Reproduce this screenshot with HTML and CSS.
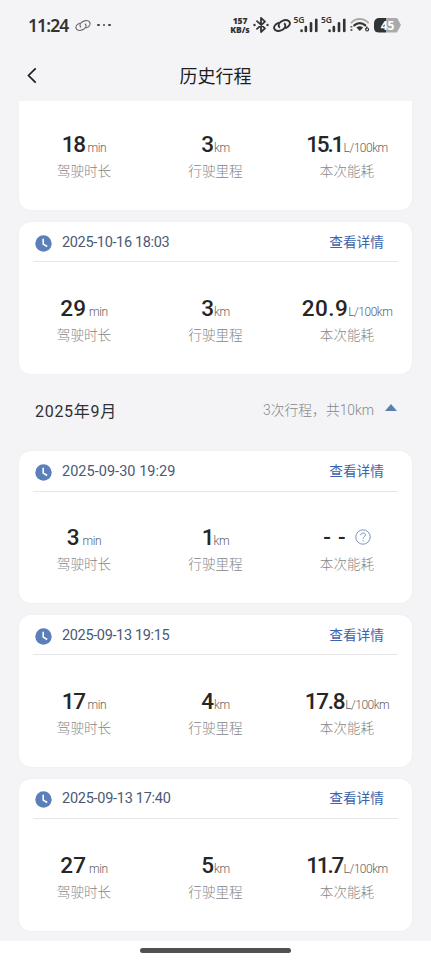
FILE: index.html
```html
<!DOCTYPE html>
<html lang="zh-CN">
<head>
<meta charset="utf-8">
<meta name="viewport" content="width=device-width, initial-scale=1">
<title>历史行程</title>
<link rel="stylesheet" href="styles.css">
</head>
<body>
<svg class="defs" width="0" height="0" aria-hidden="true">
  <symbol id="clock" viewBox="0 0 17 17"><circle cx="8.5" cy="8.5" r="8.2" fill="#5b7fb8"/><path d="M8.2 3.800v5.300l4 2.400" fill="none" stroke="#fff" stroke-width="1.600"/></symbol>
  <symbol id="link" viewBox="0 0 18 14"><g fill="none" stroke="currentColor"><ellipse cx="6.700" cy="8.200" rx="5.800" ry="4" transform="rotate(-20 6.700 8.200)" pathLength="100" stroke-dasharray="77 17 6 0"/><ellipse cx="11.300" cy="5.800" rx="5.800" ry="4" transform="rotate(-20 11.300 5.800)" pathLength="100" stroke-dasharray="27 17 56 0"/></g></symbol>
  <symbol id="signal" viewBox="0 0 19 15"><path d="M1.600 12.800v.4M6 9v4.200M11.300 5.200v8M16.700 1.600v11.600" stroke="#333" stroke-width="2.700" stroke-linecap="round"/></symbol>
</svg>
<header class="status">
  <span class="time">11:24</span>
  <svg class="link-small" viewBox="0 0 18 14"><use href="#link"/></svg>
  <span class="dots"><i></i><i></i><i></i></span>
  <span class="speed"><b>157</b><b>KB/s</b></span>
  <svg class="bt" viewBox="0 0 16 18"><path d="M4 5.200l8 7.200-4 3.600V2l4 3.600-8 7.200" fill="none" stroke="#333" stroke-width="1.800" stroke-linejoin="round" stroke-linecap="round"/><circle cx="1.500" cy="9" r="1.200" fill="#333"/><circle cx="14.500" cy="9" r="1.200" fill="#333"/></svg>
  <svg class="link-big" viewBox="0 0 18 14"><use href="#link"/></svg>
  <span class="cell"><small>5G</small><svg viewBox="0 0 19 15"><use href="#signal"/></svg></span>
  <span class="cell"><small>5G</small><svg viewBox="0 0 19 15"><use href="#signal"/></svg></span>
  <svg class="wifi" viewBox="0 0 21 16"><g fill="none" stroke-linecap="round"><path d="M1.500 5.500c4.800-5 12.700-5 17.500 0" stroke="#aaa" stroke-width="2"/><path d="M4.500 8.400c3.200-3.200 8.300-3.200 11.500 0" stroke="#333" stroke-width="2.300"/></g><path d="M6.700 10.700c2.100-1.700 5-1.700 7.100 0l-3.500 3.500z" fill="#333"/><path d="M1.500 9.200v1.500M1.500 12.500v1.500" stroke="#333" stroke-width="2"/><circle cx="18" cy="12.700" r="1.500" fill="none" stroke="#333" stroke-width="1.200"/><path d="M16.600 12.200l1.500-2.600" stroke="#333" stroke-width="1.200"/></svg>
  <span class="battery">45</span>
</header>
<nav class="title">
  <svg class="back" viewBox="0 0 10 17"><path d="M8.700 1.300L1.500 8.500l7.200 7.200" fill="none" stroke="#1d1d1f" stroke-width="1.700"/></svg>
  <h1>历史行程</h1>
</nav>
<main class="trips">
  <section class="card clipped">
    <dl class="stats">
      <div><dd><b class="snug">18</b><span class="unit min">min</span></dd><dt>驾驶时长</dt></div>
      <div><dd><b>3</b><span class="unit">km</span></dd><dt>行驶里程</dt></div>
      <div><dd><b class="tight">15.1</b><span class="unit rate">L/100km</span></dd><dt>本次能耗</dt></div>
    </dl>
  </section>
  <section class="card">
    <div class="head"><svg class="clock"><use href="#clock"/></svg><time class="t1">2025-10-16 18:03</time><a>查看详情</a></div>
    <dl class="stats">
      <div><dd><b>29</b><span class="unit min">min</span></dd><dt>驾驶时长</dt></div>
      <div><dd><b>3</b><span class="unit">km</span></dd><dt>行驶里程</dt></div>
      <div><dd><b class="wide">20.9</b><span class="unit rate">L/100km</span></dd><dt>本次能耗</dt></div>
    </dl>
  </section>
  <div class="month"><h2>2025年9月</h2><p>3次行程，共10km</p><i class="arrow"></i></div>
  <section class="card">
    <div class="head"><svg class="clock"><use href="#clock"/></svg><time class="t2">2025-09-30 19:29</time><a>查看详情</a></div>
    <dl class="stats">
      <div><dd><b>3</b><span class="unit min">min</span></dd><dt>驾驶时长</dt></div>
      <div><dd><b class="one">1</b><span class="unit">km</span></dd><dt>行驶里程</dt></div>
      <div><dd><b class="none">--</b><svg class="help" viewBox="0 0 16 16"><circle cx="8" cy="8" r="7.200"/><path d="M5.700 6.200c0-3 4.700-3 4.700-.2 0 1.700-2.300 1.700-2.300 3.800M8.100 11.200v1.300"/></svg></dd><dt>本次能耗</dt></div>
    </dl>
  </section>
  <section class="card">
    <div class="head"><svg class="clock"><use href="#clock"/></svg><time class="t3">2025-09-13 19:15</time><a>查看详情</a></div>
    <dl class="stats">
      <div><dd><b class="snug">17</b><span class="unit min">min</span></dd><dt>驾驶时长</dt></div>
      <div><dd><b>4</b><span class="unit">km</span></dd><dt>行驶里程</dt></div>
      <div><dd><b class="medium">17.8</b><span class="unit rate">L/100km</span></dd><dt>本次能耗</dt></div>
    </dl>
  </section>
  <section class="card">
    <div class="head"><svg class="clock"><use href="#clock"/></svg><time class="t4">2025-09-13 17:40</time><a>查看详情</a></div>
    <dl class="stats">
      <div><dd><b>27</b><span class="unit min">min</span></dd><dt>驾驶时长</dt></div>
      <div><dd><b>5</b><span class="unit">km</span></dd><dt>行驶里程</dt></div>
      <div><dd><b class="tight">11.7</b><span class="unit rate">L/100km</span></dd><dt>本次能耗</dt></div>
    </dl>
  </section>
</main>
<footer class="home"><span></span></footer>
</body>
</html>
```
FILE: styles.css
```css
* { box-sizing: border-box; margin: 0; padding: 0; }
body { width: 431px; height: 960px; overflow: hidden; background: #f4f4f6; color: #262628; font-family: Roboto, "Noto Sans CJK SC", sans-serif; display: flex; flex-direction: column; }
.defs { position: absolute; }
i { font-style: normal; }
svg { display: block; flex: none; }

.status { height: 50px; flex: none; display: flex; align-items: center; padding: 0 30px 0 28px; color: #333; }
.time { width: 41px; font: 600 17.5px/20px "Noto Sans", sans-serif; letter-spacing: -.9px; white-space: nowrap; }
.link-small { width: 16px; height: 13px; margin-left: 6px; color: #666; stroke-width: 1.3; }
.dots { display: flex; gap: 3px; margin-left: 6px; }
.dots i { width: 2.500px; height: 2.500px; border-radius: 2px; background: #444; }
.speed { margin-left: auto; width: 20px; display: flex; flex-direction: column; align-items: center; font: 700 8.5px/9.500px "Noto Sans", sans-serif; }
.speed b { letter-spacing: -.1px; }
.bt { width: 16px; height: 18px; margin-left: 3px; }
.link-big { width: 18px; height: 15px; margin-left: 4px; stroke-width: 1.9; }
.cell { width: 27.500px; height: 19px; margin-top: -3px; display: flex; align-items: flex-end; justify-content: flex-end; position: relative; }
.cell small { position: absolute; left: 2.500px; top: 1px; font: 600 8.500px/9px "Noto Sans", sans-serif; }
.cell svg { width: 18.500px; height: 15px; }
.wifi { width: 20px; height: 16px; margin-left: 4px; }
.battery { width: 27px; height: 15px; margin-left: 4px; border-radius: 5px; background: linear-gradient(90deg, #333 45%, #aaa 45%); color: #fff; font: 700 12px/15px "Noto Sans", sans-serif; text-align: center; clip-path: polygon(0 0, 85% 0, 100% 50%, 85% 100%, 0 100%); }

.title { height: 51px; flex: none; display: grid; grid-template-columns: 28px 1fr 28px; align-items: center; }
.back { width: 10px; height: 17px; margin-left: 27px; }
.title h1 { padding-top: 2px; font-size: 18px; font-weight: 400; line-height: 26px; text-align: center; color: #1d1d1f; }

.trips { height: 840px; flex: none; overflow: hidden; }
.card { height: 152px; width: 393px; margin: 0 auto 11.800px; background: #fff; border-radius: 12px; box-shadow: 0 0 2px rgba(0, 0, 0, .05); }
.card.clipped { height: 109px; border-radius: 0 0 12px 12px; }
.head { height: 40.500px; margin: 0 14px; border-bottom: 1px solid #e6e6e9; display: flex; align-items: center; }
.clock { width: 17px; height: 17px; margin: 3px 10px 0 2px; }
time { padding-top: 2px; font-size: 14.500px; line-height: 20px; color: #4a5a75; white-space: nowrap; }
.t1 { letter-spacing: -.35px; }
.t2 { letter-spacing: .03px; }
.t3 { letter-spacing: -.35px; }
.t4 { letter-spacing: -.27px; }
.head a { margin-left: auto; padding-right: 14px; font-size: 13.700px; line-height: 20px; color: #3d63ac; }
.stats { display: grid; grid-template-columns: repeat(3, 131.500px); justify-content: center; padding-top: 30.500px; text-align: center; }
.clipped .stats { padding-top: 28px; }
dd { height: 30px; display: flex; align-items: baseline; justify-content: center; line-height: 30px; white-space: nowrap; }
dd b { font-size: 22.500px; font-weight: 500; }
.unit { font-size: 12px; color: #5e5e61; font-weight: 300; letter-spacing: -.4px; }
.rate { letter-spacing: -.5px; }
.min { margin-left: 3px; }
.snug { letter-spacing: -1.500px; }
.tight { letter-spacing: -2.200px; margin-right: 1.500px; }
.medium { letter-spacing: -1.300px; margin-right: 1px; }
.wide { letter-spacing: .5px; }
.one { margin-right: -1px; }
dt { font-size: 13.600px; line-height: 20px; color: #868688; margin-top: 2px; font-weight: 300; }
.none { letter-spacing: 7px; }
.help { width: 16px; height: 16px; margin-left: 2px; align-self: center; fill: none; stroke: #8096ba; stroke-width: 1; }

.month { height: 46px; margin: 0 34px 19.500px; display: flex; align-items: center; }
.month h2 { padding: 2px 0 0 1px; font-size: 16px; font-weight: 400; letter-spacing: .7px; color: #303033; }
.month p { margin-left: auto; font-size: 13.800px; font-weight: 300; color: #868688; }
.arrow { margin: -2px 0 0 11px; border: 6px solid transparent; border-top: 0; border-bottom: 7px solid #5b7fb0; }

.home { flex: 1; background: #fff; display: flex; justify-content: center; align-items: center; }
.home span { width: 151px; height: 5px; border-radius: 3px; background: #505152; }
```
